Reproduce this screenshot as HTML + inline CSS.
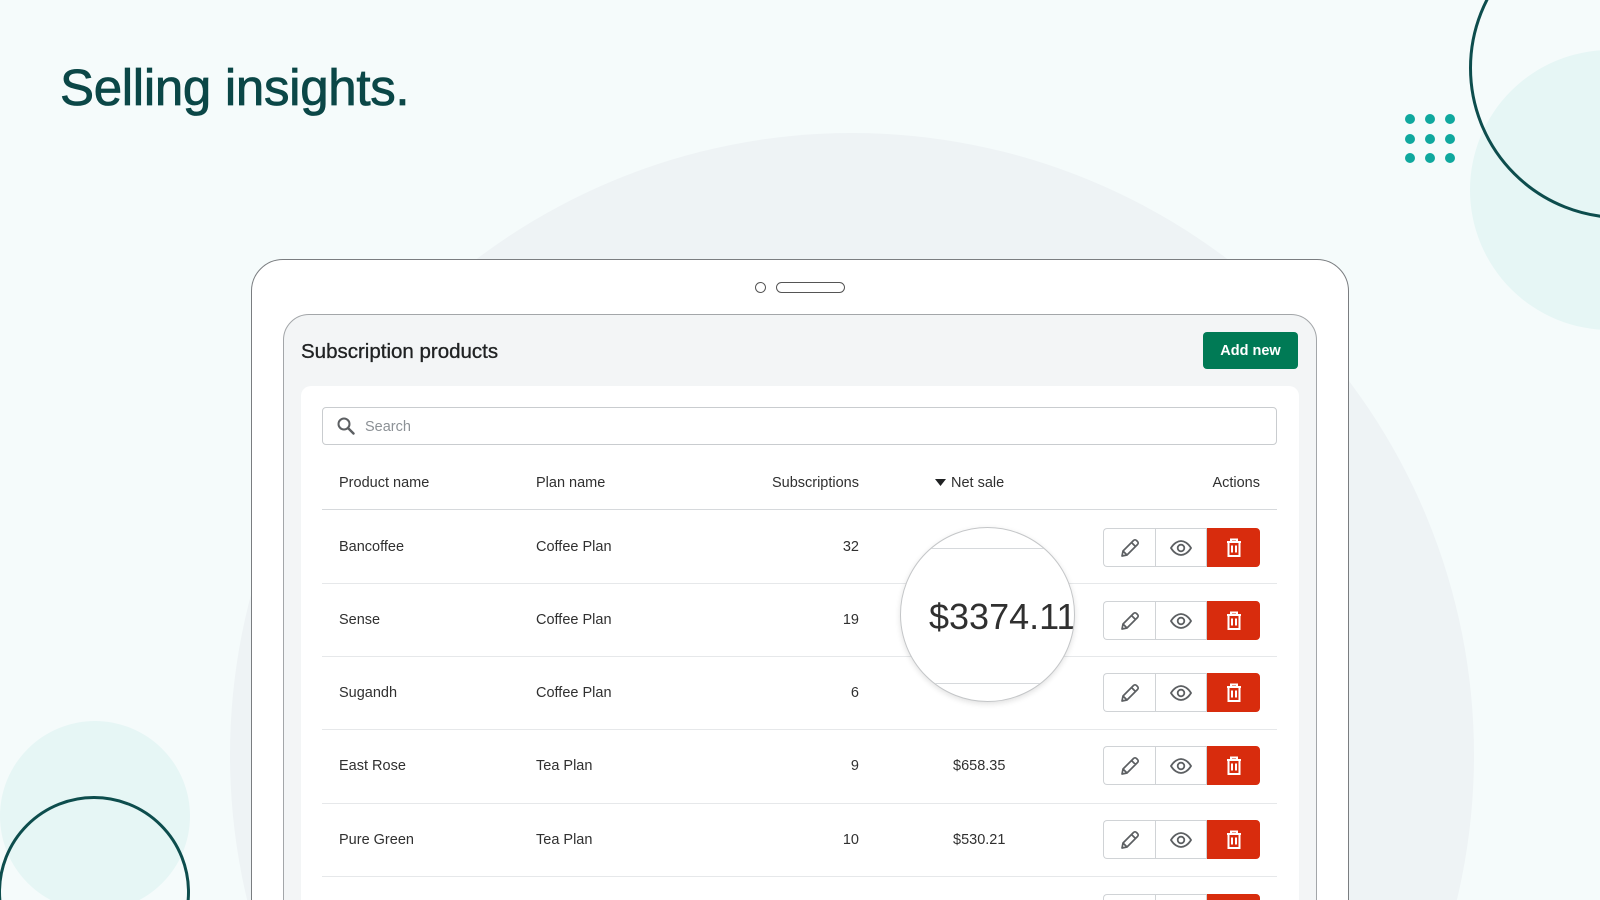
<!DOCTYPE html>
<html style="overflow:hidden;width:1600px;height:900px"><head><meta charset="utf-8"><style>
*{margin:0;padding:0;box-sizing:border-box}
body{width:1600px;height:900px;overflow:hidden;background:#f5fbfb;position:relative;font-family:"Liberation Sans",sans-serif;color:#202223}
#wrap{position:absolute;left:0;top:0;width:1600px;height:900px;overflow:hidden}
.a{position:absolute}
.circ{position:absolute;border-radius:50%}
.t{position:absolute;font-size:14.5px;color:#303030;line-height:1;transform:translateY(-50%)}
.r{text-align:right}
.sep{position:absolute;left:322px;width:955px;height:1px;background:#e6e8ea}
.btns{position:absolute;left:1103px;width:157px;height:39px;display:flex}
.btns div{width:52px;height:39px;display:flex;align-items:center;justify-content:center;border:1px solid #d0d3d6;background:#fff}
.btns div:first-child{border-radius:4px 0 0 4px;border-right:none}
.btns div.del{background:#d82c0d;border-color:#d82c0d;border-radius:0 4px 4px 0;width:53px}
</style></head><body><div id="wrap">
<div class="circ" style="left:230px;top:133px;width:1244px;height:1244px;background:#eef3f5"></div>
<div class="circ" style="left:1470px;top:50px;width:280px;height:280px;background:#e6f6f5"></div>
<div class="circ" style="left:1469px;top:-83px;width:302px;height:302px;border:3px solid #0d4d4d"></div>
<div class="circ" style="left:0;top:721px;width:190px;height:190px;background:#e6f6f5"></div>
<div class="circ" style="left:-2px;top:796px;width:192px;height:192px;border:3px solid #0d4d4d"></div>
<svg class="a" style="left:1400px;top:110px" width="60" height="60">
<g fill="#0fa89e"><circle cx="10" cy="9" r="5"/><circle cx="30" cy="9" r="5"/><circle cx="50" cy="9" r="5"/><circle cx="10" cy="29" r="5"/><circle cx="30" cy="29" r="5"/><circle cx="50" cy="29" r="5"/><circle cx="10" cy="48" r="5"/><circle cx="30" cy="48" r="5"/><circle cx="50" cy="48" r="5"/></g></svg>
<div class="a" style="left:60px;top:58px;font-size:51px;color:#0b4747;-webkit-text-stroke:0.8px #0b4747;letter-spacing:-0.3px">Selling insights.</div>

<div class="a" style="left:251px;top:259px;width:1098px;height:700px;border:1.5px solid #7a7d80;border-radius:32px;background:#fff"></div>
<div class="circ" style="left:755px;top:282px;width:11px;height:11px;border:1.5px solid #555"></div>
<div class="a" style="left:776px;top:282px;width:69px;height:11px;border:1.5px solid #555;border-radius:6px"></div>
<div class="a" style="left:283px;top:314px;width:1034px;height:650px;border:1.5px solid #a3a6a9;border-radius:26px;background:#f3f5f6"></div>
<div class="a" style="left:301px;top:340px;font-size:20.5px;color:#202223;-webkit-text-stroke:0.3px #202223">Subscription products</div>
<div class="a" style="left:1203px;top:332px;width:95px;height:37px;background:#007a55;border-radius:4px;color:#fff;font-size:14.5px;font-weight:bold;display:flex;align-items:center;justify-content:center">Add new</div>
<div class="a" style="left:301px;top:386px;width:998px;height:600px;background:#fff;border-radius:10px"></div>
<div class="a" style="left:322px;top:407px;width:955px;height:38px;border:1px solid #c9cccf;border-radius:4px"></div>
<svg class="a" style="left:337px;top:417px" width="18" height="18"><circle cx="7" cy="7" r="5.5" fill="none" stroke="#5c5f62" stroke-width="2"/><path d="M11 11l5.5 5.5" stroke="#5c5f62" stroke-width="2.4" stroke-linecap="round"/></svg>
<div class="t" style="left:365px;top:427px;color:#8c9196">Search</div>

<div class="t" style="left:339px;top:483px">Product name</div>
<div class="t" style="left:536px;top:483px">Plan name</div>
<div class="t r" style="left:700px;width:159px;top:483px">Subscriptions</div>
<svg class="a" style="left:935px;top:479px" width="11" height="7"><path d="M0 0h11L5.5 7z" fill="#202223"/></svg>
<div class="t" style="left:951px;top:483px">Net sale</div>
<div class="t r" style="left:1160px;width:100px;top:483px">Actions</div>
<div class="sep" style="top:509px;background:#d6d9dc"></div>

<div class="t" style="left:339px;top:547px">Bancoffee</div><div class="t" style="left:536px;top:547px">Coffee Plan</div><div class="t r" style="left:760px;width:99px;top:547px">32</div>
<div class="sep" style="top:583px"></div>
<div class="t" style="left:339px;top:620px">Sense</div><div class="t" style="left:536px;top:620px">Coffee Plan</div><div class="t r" style="left:760px;width:99px;top:620px">19</div>
<div class="sep" style="top:656px"></div>
<div class="t" style="left:339px;top:693px">Sugandh</div><div class="t" style="left:536px;top:693px">Coffee Plan</div><div class="t r" style="left:760px;width:99px;top:693px">6</div>
<div class="sep" style="top:729px"></div>
<div class="t" style="left:339px;top:766px">East Rose</div><div class="t" style="left:536px;top:766px">Tea Plan</div><div class="t r" style="left:760px;width:99px;top:766px">9</div><div class="t" style="left:953px;top:766px">$658.35</div>
<div class="sep" style="top:803px"></div>
<div class="t" style="left:339px;top:840px">Pure Green</div><div class="t" style="left:536px;top:840px">Tea Plan</div><div class="t r" style="left:760px;width:99px;top:840px">10</div><div class="t" style="left:953px;top:840px">$530.21</div>
<div class="sep" style="top:876px"></div>

<svg width="0" height="0" style="position:absolute"><defs>
<g id="pen"><path d="M4 20l1-5L15.5 4.5a2 2 0 0 1 3 0l1 1a2 2 0 0 1 0 3L9 19z M13.5 6.5l4 4 M5 15l4 4" fill="none" stroke="#5c5f62" stroke-width="1.7" stroke-linejoin="round"/></g>
<g id="eye"><path d="M2 12c3-5 7-7 10-7s7 2 10 7c-3 5-7 7-10 7s-7-2-10-7z" fill="none" stroke="#5c5f62" stroke-width="1.8"/><circle cx="12" cy="12" r="3.3" fill="none" stroke="#5c5f62" stroke-width="1.8"/></g>
<g id="bin"><path d="M5 6h14 M9 6V3.5h6V6 M6.5 6v14h11V6 M10 9.5v7 M14 9.5v7" fill="none" stroke="#fff" stroke-width="2"/></g>
</defs></svg>

<div class="btns" style="top:528px"><div><svg width="24" height="24"><use href="#pen"/></svg></div><div><svg width="24" height="24"><use href="#eye"/></svg></div><div class="del"><svg width="24" height="24"><use href="#bin"/></svg></div></div>
<div class="btns" style="top:601px"><div><svg width="24" height="24"><use href="#pen"/></svg></div><div><svg width="24" height="24"><use href="#eye"/></svg></div><div class="del"><svg width="24" height="24"><use href="#bin"/></svg></div></div>
<div class="btns" style="top:673px"><div><svg width="24" height="24"><use href="#pen"/></svg></div><div><svg width="24" height="24"><use href="#eye"/></svg></div><div class="del"><svg width="24" height="24"><use href="#bin"/></svg></div></div>
<div class="btns" style="top:746px"><div><svg width="24" height="24"><use href="#pen"/></svg></div><div><svg width="24" height="24"><use href="#eye"/></svg></div><div class="del"><svg width="24" height="24"><use href="#bin"/></svg></div></div>
<div class="btns" style="top:820px"><div><svg width="24" height="24"><use href="#pen"/></svg></div><div><svg width="24" height="24"><use href="#eye"/></svg></div><div class="del"><svg width="24" height="24"><use href="#bin"/></svg></div></div>
<div class="btns" style="top:894px"><div></div><div></div><div class="del"></div></div>

<div class="circ" style="left:900px;top:527px;width:175px;height:175px;background:#fff;border:1.5px solid #c4c6c8;box-shadow:0 2px 6px rgba(0,0,0,.12);overflow:hidden">
<div class="a" style="left:0;top:20px;width:175px;height:1px;background:#d6d9dc"></div>
<div class="a" style="left:0;top:155px;width:175px;height:1px;background:#d6d9dc"></div>
<div class="a" style="left:28px;top:68px;font-size:36px;color:#303030;white-space:nowrap">$3374.11</div>
</div>
</div></body></html>
